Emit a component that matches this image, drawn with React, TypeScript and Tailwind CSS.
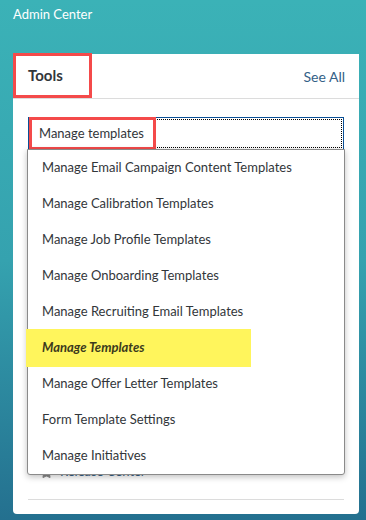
import { Star } from "lucide-react"

const options = [
  "Manage Email Campaign Content Templates",
  "Manage Calibration Templates",
  "Manage Job Profile Templates",
  "Manage Onboarding Templates",
  "Manage Recruiting Email Templates",
  "Manage Templates",
  "Manage Offer Letter Templates",
  "Form Template Settings",
  "Manage Initiatives",
]

export default function App() {
  return (
    <div className="w-[366px] h-[520px] overflow-hidden bg-gradient-to-b from-[#3bb2b7] via-[#35a2af] to-[#24708f] font-['Lato',sans-serif] text-[#32363a]">
      <div className="px-[13px] pt-[5px] h-[54px] text-[13px] text-white">Admin Center</div>

      <div className="ml-[13px] w-[346px] h-[460px] bg-white rounded-b-[4px]">
        {/* header */}
        <div className="h-[45px] flex items-center justify-between border-b border-[#dcdcdc] pr-[14px]">
          <div className="w-[79px] h-[45px] -mt-px border-[3px] border-[#f44a4a] flex items-center pl-[12px]">
            <span className="text-[15px] font-bold text-[#32363a]">Tools</span>
          </div>
          <a className="text-[14px] text-[#346187]">See All</a>
        </div>

        <div className="px-[15px] pt-[18px]">
          {/* search field with open dropdown */}
          <div className="relative">
            <div className="h-[33px] border border-[#0a4f95] p-px">
              <div className="h-full border border-dotted border-black flex items-center pl-[8px] text-[13px] text-[#32363a]">
                Manage templates
              </div>
            </div>
            <div className="absolute left-px top-0 w-[127px] h-[33px] border-[3px] border-[#f44a4a]" />

            <div className="absolute left-[-1px] top-[32px] w-[318px] bg-white border border-[#8a8a8a] rounded-b-[3px] shadow-[0_2px_6px_rgba(0,0,0,0.25)] z-10">
              {options.map((o) =>
                o === "Manage Templates" ? (
                  <div key={o} className="h-[38px] -my-px -ml-[2px] w-[225px] bg-[#fff55c] flex items-center pl-[16px] text-[13px] font-bold italic text-[#3b3a1c]">
                    {o}
                  </div>
                ) : (
                  <div key={o} className="h-[36px] flex items-center pl-[14px] text-[13px]">
                    {o}
                  </div>
                )
              )}
            </div>
          </div>

          {/* list behind dropdown */}
          <div className="h-[308px]" />
          <div className="h-[28px] flex items-center gap-[7px] pl-[12px] text-[13px] text-[#346187]">
            <Star className="w-[13px] h-[13px] fill-[#8a8a8a] text-[#8a8a8a]" />
            Release Center
          </div>
          <div className="mt-[13px] border-t border-[#dcdcdc]" />
        </div>
      </div>
    </div>
  )
}
